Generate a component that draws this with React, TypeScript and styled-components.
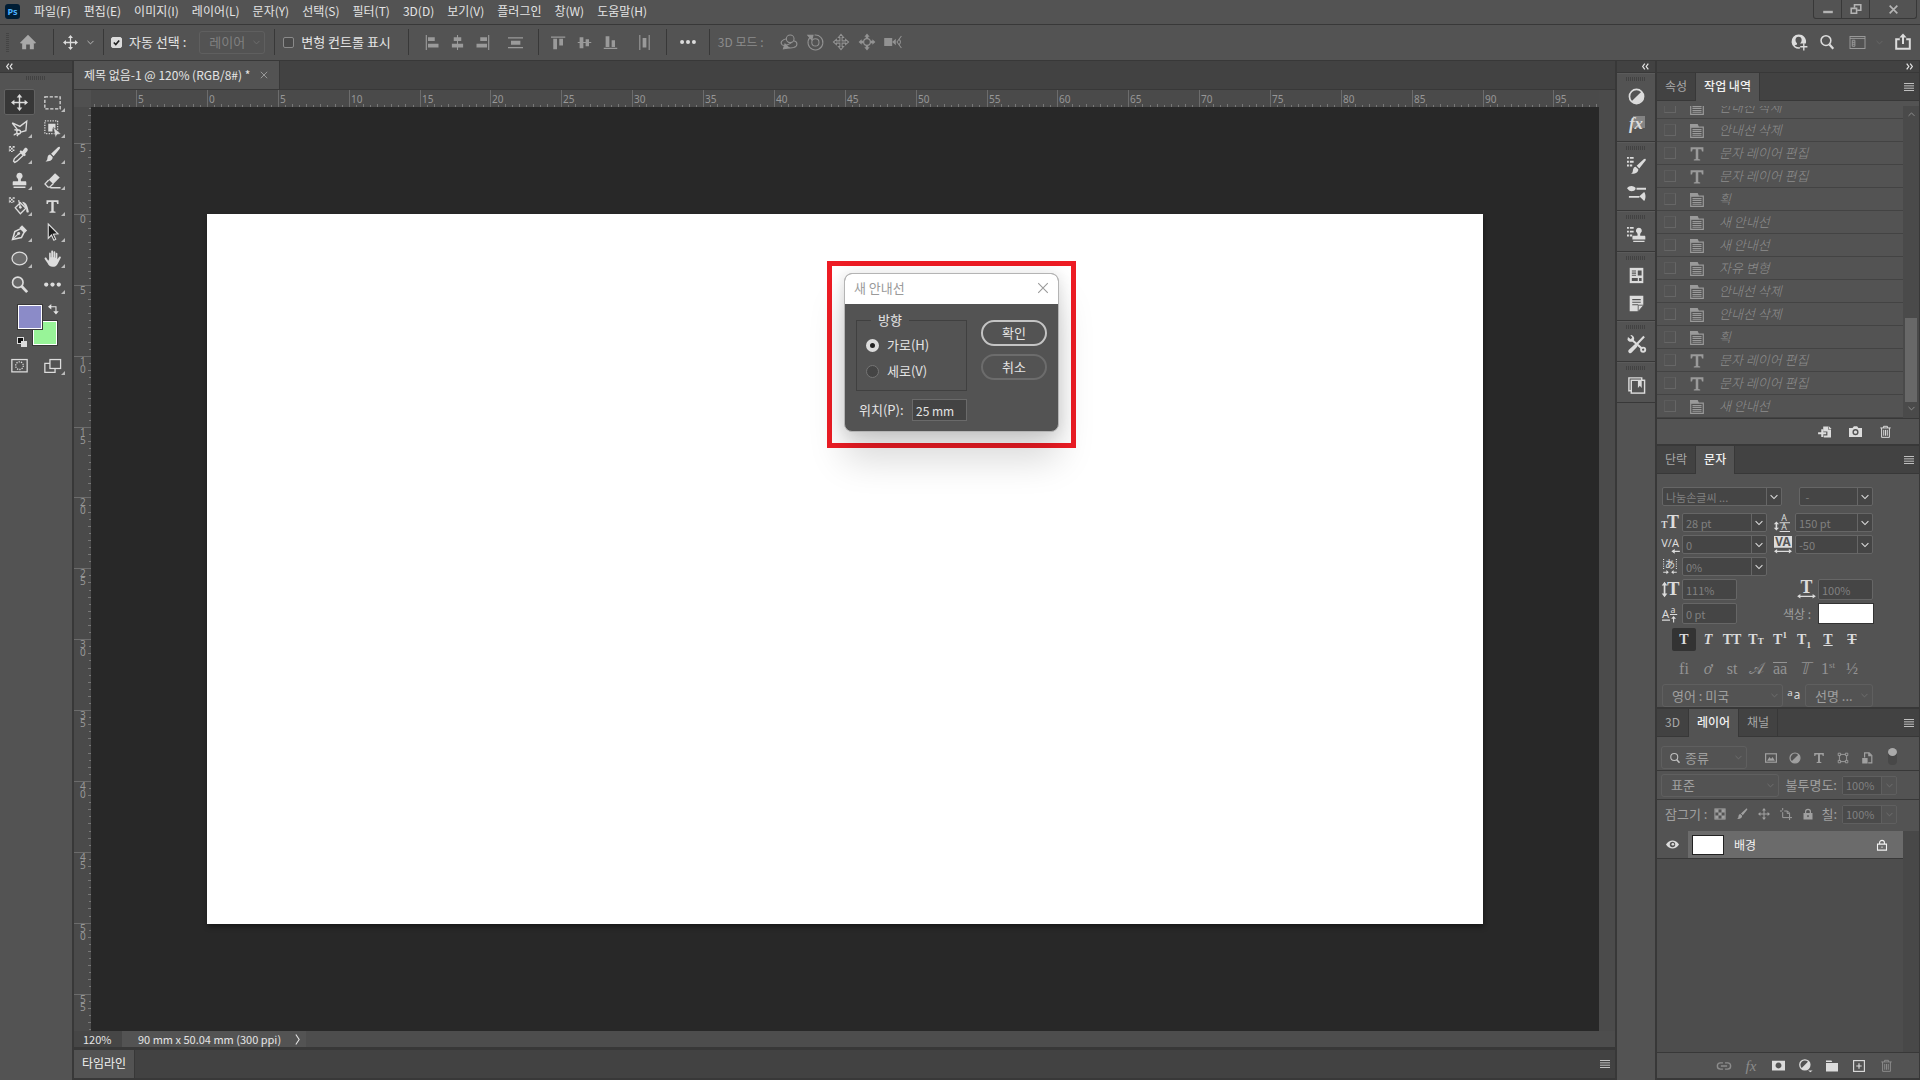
import React from 'react';
import styled, { createGlobalStyle, css } from 'styled-components';

const c = {
  panel: '#535353',
  strip: '#424242',
  line: '#383838',
  canvas: '#282828',
  ruler: '#4a4a4a',
  field: '#454545',
  edge: '#666666',
  text: '#e4e4e4',
  dim: '#a0a0a0',
  off: '#808080',
  icon: '#dcdcdc',
};

const Global = createGlobalStyle`
  *, *::before, *::after { box-sizing: border-box; }
  html, body { margin: 0; height: 100%; background: ${c.panel}; }
  body, button, input, select {
    font-family: 'Noto Sans CJK KR', 'Noto Sans', sans-serif;
    font-size: 12px;
    line-height: 16px;
  }
  button, input, select { color: inherit; margin: 0; padding: 0; }
  button { background: none; border: 0; display: inline-flex; align-items: center; justify-content: center; }
  ul { list-style: none; margin: 0; padding: 0; }
`;

/* ---------- icons ---------- */

const S = { fill: 'none', stroke: 'currentColor', strokeWidth: 1.5 } as const;
const F = { fill: 'currentColor' } as const;

const checker = (
  <g {...F}>
    <path d="M0 0h2v2h-2zM4 0h2v2h-2zM2 2h2v2h-2zM0 4h2v2h-2zM4 4h2v2h-2zM2 6h2v1h-2z" />
    <path d="M0 0v7M6 0v2" stroke="currentColor" strokeWidth=".6" />
  </g>
);
const brushShape = <path {...F} d="M18.500 1.200c.6.6.3 1.500-.2 2.200L11.300 12 8.300 9 16.400 1.500c.7-.6 1.600-.8 2.100-.3zM7.200 10l3 2.900c.2 3-2.400 5.600-8.400 5.200 2.300-1.200 2-2.700 2.400-4.900.4-1.900 1.500-3.100 3-3.200z" />;
const stampShape = <path {...F} d="M10 1a3.600 3.600 0 0 1 2.200 6.500c-.8 1.200-.7 2.500-.4 3.500h5c.8 0 1.200.6 1.200 1.500v3H2v-3c0-.9.4-1.500 1.200-1.500h5c.3-1 .4-2.300-.4-3.500A3.600 3.600 0 0 1 10 1zM3 17h14v1.800H3z" />;
const trash = (
  <g {...S} strokeWidth="1.500"><path d="M2 4.500h16M7 4.500V2h6v2.500M4 4.500v14.500h12V4.500M7.300 7.500v9M10 7.500v9M12.700 7.500v9" /></g>
);

const icons: Record<string, React.ReactNode> = {
  move: <g><path {...S} strokeWidth="1.700" d="M10 3v14M3 10h14" /><path {...F} d="M10 0l3.300 4H6.700zM10 20l3.300-4H6.700zM0 10l4-3.300v6.600zM20 10l-4-3.300v6.600z" /></g>,
  marquee: <rect {...S} x="1" y="3.500" width="18" height="14" strokeDasharray="3.800 1.900" />,
  lasso: <g {...S} strokeWidth="1.600"><path d="M8 12L1.500 3.500l9 4L18.500 1.500l-1 11-6 1.800" /><circle cx="9" cy="14" r="2.200" /><path d="M7.500 15.500c-1.500 1.500-3.500.500-4 2.500M8.500 12L4 11.500M9 16l-2 3" /></g>,
  objectSel: <g><rect {...S} x="1" y="1" width="15" height="15" strokeDasharray="1.500 1.500" /><path {...F} d="M5 4.500h8.500v5.500h-3.500v3.500H5z" /><path {...F} d="M11 8.500l9 8-4.500.5-2 3.500z" stroke={c.panel} strokeWidth=".6" /></g>,
  eyedropper: <g><g transform="translate(-2 0)">{checker}</g><path {...S} strokeWidth="1.600" d="M4.500 19.300l-1.500-1.500 1-3 7.500-7 3 3-7.500 7z" /><path {...F} d="M10 6.500l1.500-1.500 1.800 1.300L16 2.600c1.700-1.700 5 1.200 3.200 3.200L16.500 9l1 1.600-1.500 1.500z" /></g>,
  brush: brushShape,
  stamp: stampShape,
  eraser: <g><path {...F} d="M13 1.500l5.500 5-7.500 7.500-5.500-5z" /><path {...S} strokeWidth="1.600" d="M5.500 9.500L1.200 14l3.500 3.800h2L11 13.500M7.500 18.500h12" /></g>,
  bucket: <g><g transform="translate(-2 -1)">{checker}</g><path {...S} strokeWidth="1.500" d="M5 11.500l6-6 6.500 6.500-6.500 6.500zM9 2.500L11 10.500" /><circle {...F} cx="11" cy="11" r="1.600" /><path {...F} d="M13 4.500c4.500 0 6.500 4 8 12-2.300 1.800-3.600-.5-3-4z" /></g>,
  type: <path {...F} d="M2 1.500h16v5.300h-1.800l-.8-2.800h-3.800v12.400l2.400.6v1.200H6v-1.200l2.400-.6V4H4.600l-.8 2.800H2z" />,
  pen: <g><path {...S} strokeWidth="1.800" d="M1.800 18.200L4.500 9l7-3.500 4 4L12.300 16z" /><path {...F} d="M10 4.500L13 1.500l6 6-3 3z" /><path {...S} strokeWidth="1.300" d="M2.500 17.500l6-6" /><circle {...F} cx="9" cy="11.200" r="1.700" /></g>,
  pathSel: <path d="M5 0l11.500 11.500-5.500.5 2.800 6-2.200 1-2.800-6L5 17z" fill="#1c1c1c" stroke="currentColor" strokeWidth="1.300" />,
  ellipse: <ellipse {...S} cx="10" cy="10" rx="8.800" ry="7.500" fill="#6b6b6b" />,
  hand: <path {...F} d="M6 11V4c0-1.500 2-1.500 2 0v4.500h.5V1.700c0-1.600 2.200-1.600 2.200 0v6.800h.5V2.500c0-1.500 2.100-1.500 2.100 0v6.500h.5V4.500c0-1.500 2-1.500 2 0L15.700 11l2.200-3c1-1.200 2.600 0 1.700 1.500L16 16.500c-1.300 2.500-3 3.300-5.800 3.300-3.200 0-4.800-1.600-5.900-4.200L.8 10.500C.2 9 2 8.200 2.900 9.400L5 12.500z" />,
  zoomTool: <g><circle {...S} strokeWidth="1.900" cx="8" cy="7.500" r="6.200" fill="#666" /><path stroke="currentColor" strokeWidth="3.200" d="M12.500 12l6.500 7" /></g>,
  dots: <g {...F}><circle cx="2.600" cy="10" r="2.500" /><circle cx="10" cy="10" r="2.500" /><circle cx="17.400" cy="10" r="2.500" /></g>,
  swap: <g><path {...S} strokeWidth="2" d="M5 5h9.500v9" /><path {...F} d="M6 0v10L0 5zM9.500 13h10l-5 6z" /></g>,
  mask: <g {...S}><rect x="1" y="3" width="18" height="14.500" /><circle cx="10" cy="10.200" r="4.500" strokeDasharray="1.500 1.300" /></g>,
  screen: <g {...S}><path d="M7 7.500H1V18h12v-4" /><rect x="7" y="3" width="12.500" height="10.500" /></g>,
  home: <path {...F} d="M10 1L20 11l-1.500 1.200-1.200-1V19h-5v-5.800H7.700V19h-5v-7.800l-1.200 1L0 11z" />,
  alignL: <g {...F}><path d="M1 0h1.500v20H1zM4 3h9v5H4zM4 11.500h14v5H4z" /></g>,
  alignC: <g {...F}><path d="M9.300 0h1.400v20H9.300zM5 3h10v5H5zM2.500 11.500h15v5h-15z" /></g>,
  alignR: <g {...F}><path d="M17.500 0H19v20h-1.500zM7 3h9v5H7zM2 11.500h14v5H2z" /></g>,
  distV: <g {...F}><path d="M0 3h20v1.500H0zM0 16h20v1.500H0zM4 7.500h12.500v5.500H4z" /></g>,
  alignT: <g {...F}><path d="M0 2h19v1.500H0zM3 5h5v14H3zM11 5h5v9h-5z" /></g>,
  alignM: <g {...F}><path d="M1 9.300h18v1.400H1zM3.500 3h5v14.500h-5zM11.500 5.500h4.500v9.500h-4.500z" /></g>,
  alignB: <g {...F}><path d="M1 17h18v1.500H1zM3.500 1.500h5V16h-5zM11.500 7h4.500v9h-4.500z" /></g>,
  distH: <g {...F}><path d="M3 0h1.500v20H3zM15.500 0H17v20h-1.500zM7.500 4h5v12.500h-5z" /></g>,
  orbit: <g {...S} strokeWidth="1.300"><circle cx="11.500" cy="6" r="4.800" /><path d="M7 6C2 7-2 10 1.500 13.500c2.500 2 9-.5 12-3M15.800 8.500c5.500 1 5.500 7 0 8.500-4 .8-7 .3-9-1" /><path {...F} d="M3 18.500l2-6 5 5z" /></g>,
  roll: <g {...S} strokeWidth="1.300"><circle cx="10.500" cy="10.500" r="4.500" /><path d="M3.500 4.500a9.300 9.300 0 1 0 6-3.200" /><path {...F} d="M1 1.500l6.500 0-1.500 6z" /></g>,
  pan3d: <path {...S} strokeWidth="1.300" d="M10 .5l3.200 3.800h-1.800V8.600h4.300V6.800L19.500 10l-3.800 3.200v-1.800h-4.300v4.300h1.800L10 19.500l-3.200-3.800h1.800v-4.300H4.300v1.800L.5 10l3.800-3.200v1.800h4.300V4.300H6.800z" />,
  slide3d: <g><circle {...S} cx="10" cy="10" r="4.200" /><path {...F} d="M10-.5l3.300 3.800h-1.800V6H8.500V3.300H6.700zM10 20.500l3.300-3.800h-1.800V14h-3v2.700H6.700zM-.5 10l3.800-3.300v1.800H6v3H3.300v1.800zM20.500 10l-3.800-3.300v1.800H14v3h2.700v1.800z" /></g>,
  camera3d: <g><path {...F} d="M-1 5h10v10H-1zM9 10l4.500-4v8z" /><path {...S} strokeWidth="1.300" d="M20.500 2.500L15 10l5.500 7.500M18 7c1.500 1.500 1.500 4 0 6" /></g>,
  user: <g><path {...F} d="M9.500.5a9 9 0 1 0 1.500 17.900V12h7.500A9 9 0 0 0 9.500.5z" /><path d="M9.500 3.500c5 0 4.500 6.500 2 8v1.500l2.500 1.500c-2 2.800-7 2.800-9.500 0L7.500 13v-1.500C5 10 4.500 3.500 9.500 3.500z" fill={c.panel} /><path {...S} strokeWidth="1.700" d="M16 11.500v9M11.500 16h9" /></g>,
  search: <g {...S} strokeWidth="2.200"><circle cx="8.500" cy="8" r="7" /><path d="M13.500 13.500l5.500 6" strokeWidth="3.200" /></g>,
  workspace: <g {...S} strokeWidth="1.300"><rect x="0" y="2" width="20" height="16" /><path d="M0 4.500h20M3 7h3.500v8H3zM3 9.700h3.500M3 12.300h3.500" /></g>,
  share: <g {...S} strokeWidth="2.500"><path d="M6 6.500H1.500v12h17v-12H14" /><path d="M10 12.500V3" /><path {...F} stroke="none" d="M10-.5l4.500 5h-9z" /></g>,
  min: <path {...F} d="M2 13h16v4H2z" />,
  restore: <g {...S} strokeWidth="2.600"><path d="M2 9h9v8H2z" /><path d="M7.500 8V3h10.500v9h-6" /></g>,
  close: <path {...S} strokeWidth="3" d="M3 3l14 14M17 3L3 17" />,
  thinClose: <path {...S} strokeWidth="1.800" d="M2 2l16 16M18 2L2 18" />,
  chevron: <path {...S} strokeWidth="2.700" d="M1.500 5.500l8.500 8.500 8.500-8.500" />,
  chevronUp: <path {...S} strokeWidth="2.700" d="M1.500 14l8.500-8.500 8.500 8.500" />,
  right: <path {...S} strokeWidth="2" d="M7 1l6 9-6 9" />,
  collapse: <path {...S} strokeWidth="3.500" d="M8 2L2 10l6 8M18 2l-6 8 6 8" />,
  expand: <path {...S} strokeWidth="3.500" d="M2 2l6 8-6 8M12 2l6 8-6 8" />,
  burger: <path {...S} strokeWidth="2" d="M0 3h20M0 7.700h20M0 12.400h20M0 17h20" />,
  adjust: <g><circle {...S} strokeWidth="2" cx="10" cy="10" r="8.300" /><path {...F} d="M16 4A8.500 8.500 0 0 1 4 16z" /></g>,
  adjustMenu: <g><circle {...S} strokeWidth="2" cx="9" cy="9" r="7.800" /><path {...F} d="M14.500 3.500a7.600 7.600 0 0 1-11 11zM14 17.500h7l-3.500 3z" /></g>,
  brushes: <g><g {...F}><path d="M0 1h2v2H0zM3 1h4v2H3zM0 5h2v2H0zM3 5h4v2H3zM0 9h2v2H0zM3 9h2.500v2H3z" /></g><g transform="translate(2.500 2) scale(.92)">{brushShape}</g></g>,
  brushSet: <g {...F}><path d="M0 4.500C2 2 5 1.500 7.500 3l1.500 1v1.500L7.500 7C5 8 2 7.500 1.500 6zM10 4h10v2H10zM2 12.500h11v2H2zM13 13l5-4.500c2 2 2 7.500 0 9.500z" /></g>,
  cloneSrc: <g><path {...F} d="M0 2h2v2H0zM3 2h4v2H3zM0 6h2v2H0zM3 6h4v2H3zM0 10h2v2H0zM3 10h2.500v2H3z" /><g transform="translate(4 2) scale(.85)">{stampShape}</g></g>,
  libs: <g><path {...F} d="M2 1h16v18H2z" /><path d="M4.500 4h5v1.300h-5zM4.500 6.500h5v1.300h-5zM4.500 9h5v1.300h-5zM11.500 4h4.500v6h-4.500zM4.500 13h7v3.500h-7zM13 13h3v3.500h-3z" fill={c.panel} /></g>,
  note: <g><path {...F} d="M2 1h16v11l-6 7H2z" /><path d="M5 5.500h10M5 8.500h10M5 11.500h7" stroke={c.panel} strokeWidth="1.400" /><path {...F} stroke={c.panel} d="M18.500 12h-6.500v7.500z" /></g>,
  tools: <g><path stroke="currentColor" strokeWidth="2.200" d="M5 5l11 9.500M18 1.500L9 11" /><circle {...S} strokeWidth="2" cx="17" cy="15.500" r="2.200" /><path {...F} d="M1 2l3 2.500 1.500-2L3.500 0C6 0 8 2 7.500 4.500 6 8.500 1.500 7.500.5 5zM8.500 9.500l2.500 2.500-6 6.500c-2 2-5-1-3-3z" /></g>,
  book: <g {...S} strokeWidth="1.500"><rect x="4.500" y="4.500" width="14" height="13.500" /><path d="M4.500 15.500H2V2h13.500v2.500" /><path {...F} d="M11.500 5h4v7.500l-2-2.200-2 2.200z" stroke="none" /></g>,
  doc: <g><path {...S} strokeWidth="1.700" d="M1 4.500h18V19H1z" /><path {...F} d="M0 0h11l2 4.500H0z" /><path {...S} strokeWidth="1.500" d="M3.500 8h13M3.500 10.800h13M3.500 13.500h13M3.500 16.200h13" /></g>,
  newDoc: <g><path {...F} fillRule="evenodd" d="M7 1h8v5h5v13H8v-3h6v-7H7zM16 0l5 5h-5z" /><path d="M5.500 5.500v13M-1.500 12h13.500" stroke="currentColor" strokeWidth="3.500" /></g>,
  camera: <g><path {...F} d="M0 4.500h5.500l2-2.500h5l2 2.500H20v14H0z" /><circle cx="10" cy="11" r="3.600" {...S} stroke={c.panel} strokeWidth="2.200" /></g>,
  trash,
  image: <g><rect {...S} strokeWidth="2" x="1" y="3" width="18" height="14" /><path {...F} d="M3.500 14.500l4-6 2.500 3 2.500-3 4 6z" /></g>,
  shape: <g {...S} strokeWidth="1.500"><path d="M4 4h12v12H4z" /><g fill={c.panel}><path d="M2 2h4v4H2zM14 2h4v4h-4zM2 14h4v4H2zM14 14h4v4h-4z" /></g></g>,
  smart: <g><path {...S} strokeWidth="2" d="M6 9V1.500h7.500L18 6v12h-6" /><path {...F} d="M2 10h9v9H2zM12 1v6h6z" /></g>,
  lock: <g><path {...S} strokeWidth="2" d="M6 9V6c0-5 8-5 8 0v3" /><path {...F} fillRule="evenodd" d="M2.500 8.500h15v10.500h-15zM10 12a1.500 1.500 0 1 0 .01 0z" /></g>,
  lockOpen: <g {...S} strokeWidth="1.800"><path d="M6 8V6c0-5 8-5 8 0v2M2.500 8.500h15v10h-15z" /><circle {...F} cx="10" cy="13.500" r="1.200" stroke="none" /></g>,
  checks: <g><rect {...S} strokeWidth="1.600" x="1.500" y="1.500" width="17" height="17" /><path {...F} d="M2 2h5.500v5.500H2zM12.500 2H18v5.500h-5.500zM7.300 7.300h5.400v5.400H7.300zM2 12.500h5.500V18H2zM12.500 12.500H18V18h-5.500z" /></g>,
  artboard: <g {...S} strokeWidth="1.600"><path d="M4.500 0v4M0 5h3.500M16 16.500V20M16 16H20M4.500 7v9h11.500V9M7 5h5.500l3.500 3.500" /><path d="M12 5v4h4" /></g>,
  eye: <g><path {...F} d="M0 10c5-8 15-8 20 0-5 8-15 8-20 0z" /><circle cx="10" cy="10" r="4.200" fill={c.panel} /><circle {...F} cx="10.500" cy="9.500" r="2" /></g>,
  link: <g {...S} strokeWidth="2"><path d="M8.500 14.500H5a4.500 4.500 0 0 1 0-9h3.500M11.500 5.500H15a4.500 4.500 0 0 1 0 9h-3.500M5.500 10h9" /></g>,
  addMask: <g><path {...F} fillRule="evenodd" d="M0 2.500h20v15H0zM10 5.500a4.500 4.500 0 1 0 .01 0z" /></g>,
  folder: <path {...F} d="M0 1h9l1.500 2.500H0zM0 5h20v14H0z" />,
  plus: <g {...S} strokeWidth="1.900"><rect x="1" y="1" width="18" height="18" /><path d="M10 5.500v9M5.500 10h9" /></g>,
  fontSize: <g {...F} fontFamily="Liberation Serif, serif" fontWeight="700"><text x="-1" y="17" fontSize="11">T</text><text x="6" y="17" fontSize="21">T</text></g>,
  leading: <g {...F} fontFamily="Noto Sans, sans-serif"><text x="9" y="8" fontSize="11">A</text><text x="9" y="19" fontSize="11">A</text><path d="M7 9h13v1.300H7zM7 20h13v1.200H7zM3 8l3.300 3.500H4V16h2.300L3 19.500-.3 16H2v-4.500H-.3z" /></g>,
  kerning: <g {...F} fontFamily="Noto Sans, sans-serif"><text x="-1" y="13" fontSize="13">V/A</text><path d="M11 18l4-2.800v2.100h6v1.400h-6v2.100z" /></g>,
  tracking: <g><path {...F} d="M0 0h20v13H0zM0 17l3.500-2.500v1.800h13v-1.800L20 17l-3.500 2.500v-1.800h-13v1.800z" /><text x="1.500" y="11.500" fontSize="13" fontWeight="700" fontFamily="Noto Sans, sans-serif" fill={c.panel}>VA</text></g>,
  tsume: <g {...F}><text x="3.500" y="11.500" fontSize="13" fontFamily="Noto Sans CJK JP, sans-serif">あ</text><path d="M1.500 15.800h4V13.800l3 2.700-3 2.700v-2h-4zM18.500 15.800h-4v-2l-3 2.700 3 2.700v-2h4z" /><path {...S} strokeWidth="1.400" strokeDasharray="1.400 1.400" d="M2 0v12.500M18 0v12.500" /></g>,
  vScale: <g {...F}><path d="M3 1l3.300 4.300H4v9.400h2.300L3 19-.3 14.700H2V5.300H-.3z" /><text x="6" y="17" fontSize="22" fontWeight="700" fontFamily="Liberation Serif, serif">T</text></g>,
  hScale: <g {...F}><text x="3" y="14" fontSize="21" fontWeight="700" fontFamily="Liberation Serif, serif">T</text><path d="M-1 18l3.800-2.700v2h14.400v-2L21 18l-3.800 2.700v-2H2.800v2z" /></g>,
  baseline: <g {...F} fontFamily="Noto Sans, sans-serif"><text x="0" y="15" fontSize="14">A</text><text x="10.500" y="8.500" fontSize="11">a</text><path d="M0 17h10v1.400H0zM10 10h9v1.400h-9zM14.500 12.500l3 3.500h-2.300v4.500h-1.400V16h-2.300z" /></g>,
  antialias: <g {...F} fontFamily="Noto Sans, sans-serif"><text x="-1" y="10" fontSize="15">a</text><text x="9" y="16" fontSize="18">a</text></g>,
};

const IconSvg = styled.svg<{ $s: number }>`
  width: ${p => p.$s}px;
  height: ${p => p.$s}px;
  flex: none;
  display: block;
  overflow: visible;
`;
const Icon = ({ n, s = 16 }: { n: string; s?: number }) => (
  <IconSvg $s={s} viewBox="0 0 20 20" aria-hidden="true">{icons[n]}</IconSvg>
);

/* ---------- shell ---------- */

const Shell = styled.div`
  display: flex;
  flex-direction: column;
  height: 100vh;
  min-height: 900px;
  min-width: 1200px;
  background: ${c.panel};
  color: ${c.text};
  overflow: hidden;
  cursor: default;
`;
const MenuBar = styled.header`
  display: flex;
  height: 25px;
  flex: none;
  border-bottom: 1px solid ${c.line};
`;
const Logo = styled.span`
  width: 15px;
  height: 15px;
  margin: 4px 14px 0 5px;
  border-radius: 3px;
  background: #001d34;
  color: #4bb0ff;
  font: 700 9px/15px 'Noto Sans', sans-serif;
  text-align: center;
`;
const Menus = styled.nav`
  display: flex;
  flex: 1;
  gap: 13px;
  padding-top: 3px;
`;
const WindowButtons = styled.div`
  display: flex;
  height: 19px;
  margin-right: 3px;
  border: 1px solid ${c.line};
  border-top: 0;
  border-radius: 0 0 3px 3px;
  color: #b4b4b4;
`;
const WindowButton = styled.button<{ $w: number }>`
  width: ${p => p.$w}px;
  & + & { border-left: 1px solid ${c.line}; }
`;

const OptionsBar = styled.div`
  display: flex;
  align-items: center;
  flex: none;
  height: 36px;
  padding-bottom: 1px;
  border-bottom: 1px solid ${c.line};
`;
const Grip = styled.i<{ $v?: boolean }>`
  flex: none;
  ${p => p.$v
    ? css`width: 3px; height: 20px; margin: 0 0 0 6px; background: repeating-linear-gradient(0deg, #444 0 1px, transparent 1px 2px);`
    : css`width: 20px; height: 4px; margin: 3px auto 1px; background: repeating-linear-gradient(90deg, #424242 0 1px, transparent 1px 2px);`}
`;
const Divider = styled.i`
  width: 1px;
  height: 26px;
  flex: none;
  background: ${c.line};
`;
const Cell = styled.button<{ $w?: number; $tone?: string }>`
  width: ${p => p.$w ?? 26}px;
  flex: none;
  color: ${p => p.$tone ?? c.icon};
`;
const Group = styled.div<{ $l?: number; $r?: number }>`
  display: flex;
  align-items: center;
  padding: 0 ${p => p.$r ?? 8}px 0 ${p => p.$l ?? 8}px;
`;
const CheckLabel = styled.label`
  display: flex;
  align-items: center;
  gap: 7px;
  font-size: 13px;
  white-space: nowrap;
`;
const Check = styled.input`
  appearance: none;
  width: 11px;
  height: 11px;
  border: 1px solid #8a8a8a;
  border-radius: 2px;
  background: #4a4a4a;
  &:checked {
    border-color: #dcdcdc;
    background: #dcdcdc url("data:image/svg+xml,%3Csvg xmlns='http://www.w3.org/2000/svg' viewBox='0 0 10 10'%3E%3Cpath d='M2 5l2.200 2.200L8 2.800' fill='none' stroke='%23222' stroke-width='1.800'/%3E%3C/svg%3E");
  }
`;
const SelectBox = styled.span<{ $w: number; $off?: boolean }>`
  display: inline-flex;
  position: relative;
  align-items: center;
  width: ${p => p.$w}px;
  height: 23px;
  flex: none;
  border: 1px solid #5f5f5f;
  border-radius: 3px;
  color: ${p => (p.$off ? c.off : c.dim)};
  > svg { position: absolute; right: 4px; color: #6e6e6e; pointer-events: none; }
  > svg:first-child { right: auto; left: 8px; color: #c0c0c0; }
`;
const Select = styled.select<{ $l?: number }>`
  appearance: none;
  width: 100%;
  height: 100%;
  padding-left: ${p => p.$l ?? 9}px;
  border: 0;
  outline: 0;
  background: none;
  font-size: 13px;
`;
const ModeText = styled.span`
  color: #8c8c8c;
  font-size: 12px;
  white-space: nowrap;
`;
const Spacer = styled.i`flex: 1;`;

const Workspace = styled.main`
  display: flex;
  flex: 1;
  min-height: 0;
  gap: 2px;
  padding-right: 1px;
  background: ${c.line};
`;
const Strip = styled.div<{ $end?: boolean }>`
  display: flex;
  align-items: center;
  justify-content: ${p => (p.$end ? 'flex-end' : 'flex-start')};
  flex: none;
  height: 12px;
  padding: 0 6px;
  border-bottom: 1px solid ${c.line};
  background: ${c.strip};
`;
const Column = styled.aside<{ $w: number }>`
  display: flex;
  flex-direction: column;
  flex: none;
  width: ${p => p.$w}px;
  background: ${c.panel};
`;

/* ---------- toolbox ---------- */

const ToolGrid = styled.div<{ $top?: number }>`
  display: grid;
  grid-template-columns: 33px 33px;
  grid-auto-rows: 26px;
  padding: ${p => p.$top ?? 0}px 0 0 3px;
`;
const Tool = styled.button<{ $on?: boolean; $more?: boolean }>`
  position: relative;
  color: ${c.icon};
  ${p => p.$on && css`
    margin: 0 1px;
    border: 1px solid #626262;
    border-radius: 2px;
    background: #373737;
  `}
  ${p => p.$more && css`
    &::after {
      content: '';
      position: absolute;
      right: 4px;
      bottom: 3px;
      border: 2px solid transparent;
      border-right-color: #bbb;
      border-bottom-color: #bbb;
    }
  `}
`;
const Swatches = styled.div`
  position: relative;
  height: 55px;
`;
const Swatch = styled.button<{ $x: number; $y: number; $c: string }>`
  position: absolute;
  left: ${p => p.$x}px;
  top: ${p => p.$y}px;
  width: 24px;
  height: 24px;
  border: 1px solid #fff;
  outline: 1px solid ${c.line};
  background: ${p => p.$c};
`;
const SwapButton = styled.button`
  position: absolute;
  left: 48px;
  top: 7px;
`;
const ResetButton = styled.button`
  position: absolute;
  z-index: 0;
  left: 17px;
  top: 40px;
  width: 7px;
  height: 7px;
  border: 1px solid #ddd;
  background: #111;
  &::after {
    content: '';
    position: absolute;
    z-index: -1;
    left: 3px;
    top: 3px;
    width: 6px;
    height: 6px;
    background: #ddd;
  }
`;

/* ---------- document ---------- */

const Doc = styled.section`
  display: flex;
  flex-direction: column;
  flex: 1;
  min-width: 0;
  background: ${c.strip};
`;
const DocTabs = styled.div`
  display: flex;
  flex: none;
  height: 29px;
  border-bottom: 1px solid ${c.line};
`;
const DocTab = styled.button`
  gap: 10px;
  padding: 0 11px 1px 10px;
  border-right: 1px solid ${c.line};
  background: ${c.panel};
  white-space: nowrap;
  svg { color: #b4b4b4; }
`;
const View = styled.div`
  display: grid;
  grid-template: 17px 1fr / 17px 1fr 16px;
  flex: 1;
  min-height: 0;
`;
const Ruler = styled.div<{ $corner?: boolean }>`
  display: flex;
  align-items: center;
  justify-content: center;
  overflow: hidden;
  min-width: 0;
  min-height: 0;
  background: ${p => (p.$corner ? '#505050' : c.ruler)};
`;
const RulerSvg = styled.svg`
  flex: none;
  font: 10px 'Noto Sans', sans-serif;
  fill: #979797;
`;
const Canvas = styled.div`
  display: flex;
  align-items: center;
  justify-content: center;
  min-width: 0;
  overflow: hidden;
  background: ${c.canvas};
`;
const ScrollStrip = styled.div`background: #4b4b4b;`;
const Artboard = styled.div`
  position: relative;
  flex: none;
  width: 1276px;
  height: 710px;
  background: #fff;
  box-shadow: 1px 3px 5px rgba(0, 0, 0, 0.4);
`;
const Callout = styled.div`
  position: absolute;
  left: 620px;
  top: 47px;
  padding: 7px 12px 11px;
  border: 5px solid #ed1c24;
`;
const Dialog = styled.form`
  width: 215px;
  border: 1px solid #b4b4b4;
  border-radius: 8px;
  background: ${c.panel};
  box-shadow: 0 28px 36px rgba(0, 0, 0, 0.15), 0 2px 16px rgba(0, 0, 0, 0.14);
  overflow: hidden;
  font-size: 13px;
`;
const DialogTitle = styled.div`
  display: flex;
  align-items: center;
  justify-content: space-between;
  height: 30px;
  padding: 0 9px 2px;
  background: #fff;
  color: #9a9a9a;
`;
const DialogBody = styled.div`
  display: grid;
  grid-template-columns: 111px 66px;
  justify-content: space-between;
  padding: 8px 11px 10px;
`;
const Direction = styled.fieldset`
  margin: 0;
  padding: 4px 9px 6px;
  min-width: 0;
  border: 1px solid #404040;
  legend { margin-left: 5px; padding: 0 7px; line-height: 16px; }
`;
const RadioLabel = styled.label`
  display: flex;
  align-items: center;
  gap: 8px;
  height: 26px;
`;
const Radio = styled.input`
  appearance: none;
  width: 13px;
  height: 13px;
  border: 1px solid #757575;
  border-radius: 50%;
  background: #454545;
  &:checked { border: 4px solid #dcdcdc; background: #222; }
`;
const DialogButtons = styled.div`
  display: flex;
  flex-direction: column;
  gap: 8px;
  padding-top: 8px;
`;
const Pill = styled.button<{ $primary?: boolean }>`
  height: 26px;
  padding-bottom: 1px;
  border: ${p => (p.$primary ? '2px solid #c4c4c4' : '2px solid #6c6c6c')};
  border-radius: 13px;
  font-size: 13px;
`;
const PositionRow = styled.label`
  display: flex;
  align-items: center;
  justify-content: space-between;
  margin-top: 8px;
  padding-left: 3px;
  white-space: nowrap;
`;
const PositionInput = styled.input`
  width: 55px;
  height: 22px;
  padding-left: 3px;
  border: 1px solid #6a6a6a;
  outline: 0;
  background: #434343;
`;
const StatusBar = styled.div`
  display: flex;
  align-items: center;
  flex: none;
  height: 16px;
  background: #4d4d4d;
  font-size: 11px;
`;
const ZoomLevel = styled.span`
  width: 48px;
  padding-left: 9px;
  background: #464646;
`;
const DocInfo = styled.span`
  display: flex;
  align-items: center;
  justify-content: space-between;
  width: 184px;
  padding: 0 3px 0 16px;
  background: ${c.panel};
  white-space: nowrap;
`;
const Timeline = styled.div`
  display: flex;
  align-items: stretch;
  justify-content: space-between;
  flex: none;
  height: 33px;
  padding-right: 5px;
  border: solid ${c.line};
  border-width: 3px 0 2px;
  background: ${c.strip};
  > svg { align-self: center; color: #c0c0c0; }
`;

/* ---------- dock ---------- */

const DockGroup = styled.div`
  display: flex;
  flex-direction: column;
  align-items: center;
  padding-bottom: 3px;
  border-top: 1px solid #5b5b5b;
  border-bottom: 1px solid ${c.line};
`;
const DockButton = styled.button`
  width: 38px;
  height: 28px;
  color: ${c.icon};
`;
const Fx = styled.span<{ $s: number; $box?: boolean }>`
  font: italic ${p => p.$s}px/20px 'Liberation Serif', serif;
  padding: 0 2px;
  ${p => p.$box && css`
    font-weight: 700;
    background: linear-gradient(#848484, #848484) 6px 2px / 14px 12px no-repeat;
  `}
`;

/* ---------- panels ---------- */

const Panel = styled.section<{ $grow?: boolean }>`
  display: flex;
  flex-direction: column;
  flex: ${p => (p.$grow ? 1 : 'none')};
  min-height: 0;
  border-bottom: 2px solid ${c.line};
`;
const Tabs = styled.div`
  display: flex;
  align-items: stretch;
  flex: none;
  height: 28px;
  padding-right: 5px;
  background: ${c.strip};
  border-bottom: 1px solid ${c.line};
  > svg { align-self: center; color: #c0c0c0; }
`;
const Tab = styled.button<{ $on?: boolean; $flat?: boolean }>`
  padding: 0 8px 2px;
  border-right: 1px solid ${c.line};
  color: ${p => (p.$on ? '#f0f0f0' : '#a8a8a8')};
  font-weight: ${p => (p.$on && !p.$flat ? 500 : 400)};
  ${p => p.$on && css`background: ${c.panel};`}
  ${p => p.$on && !p.$flat && css`margin-bottom: -1px;`}
`;
const HistoryBody = styled.div`
  display: flex;
  height: 312px;
  margin-top: 5px;
`;
const HistoryList = styled.ul`
  display: flex;
  flex: 1;
  flex-direction: column;
  justify-content: flex-end;
  overflow: hidden;
`;
const HistoryRow = styled.li`
  display: flex;
  align-items: center;
  flex: none;
  height: 23px;
  padding-left: 7px;
  border-bottom: 1px solid #434343;
  color: #8d8d8d;
  font-size: 13px;
  font-style: italic;
  font-weight: 300;
  input { width: 12px; height: 12px; appearance: none; border: 1px solid #666; border-left-color: #5c5c5c; border-top-color: #5c5c5c; }
`;
const HistoryIcon = styled.span`
  display: flex;
  justify-content: center;
  width: 16px;
  margin: 2px 14px 0 13px;
  color: #9a9a9a;
`;
const ScrollBar = styled.div`
  display: flex;
  flex-direction: column;
  align-items: center;
  width: 16px;
  padding: 5px 0 6px;
  background: #4a4a4a;
  color: #909090;
`;
const Thumb = styled.i`
  width: 12px;
  height: 84px;
  margin: auto 0 3px;
  background: #686868;
`;
const Footer = styled.div<{ $r: number; $gap: number }>`
  display: flex;
  align-items: center;
  justify-content: flex-end;
  gap: ${p => p.$gap}px;
  flex: none;
  height: 26px;
  padding-right: ${p => p.$r}px;
  border-top: 1px solid ${c.line};
  color: ${c.icon};
`;
const FootButton = styled.button<{ $off?: boolean }>`
  width: 14px;
  color: ${p => (p.$off ? '#8c8c8c' : c.icon)};
`;
const Combo = styled.span<{ $w: number; $h?: number }>`
  display: inline-flex;
  flex: none;
  width: ${p => p.$w}px;
  height: ${p => p.$h ?? 19}px;
  border: 1px solid ${c.edge};
  border-radius: 2px;
  background: ${c.field};
  input {
    flex: 1;
    width: 0;
    min-width: 0;
    padding-left: 3px;
    border: 0;
    outline: 0;
    background: none;
    color: ${c.off};
    font-size: 11px;
  }
  button { width: 15px; border-left: 1px solid ${c.edge}; }
`;
const CharForm = styled.div`
  height: 233px;
  padding: 13px 0 0 5px;
`;
const CharRow = styled.div<{ $mt: number }>`
  display: flex;
  align-items: center;
  margin-top: ${p => p.$mt}px;
  color: ${c.icon};
`;
const CharIcon = styled.span<{ $w?: number; $ml?: number }>`
  display: inline-flex;
  flex: none;
  width: ${p => p.$w ?? 20}px;
  margin-left: ${p => p.$ml ?? 0}px;
`;
const ColorLabel = styled.label`
  display: flex;
  align-items: center;
  gap: 7px;
  margin-left: 46px;
  color: ${c.dim};
`;
const ColorWell = styled.button`
  width: 56px;
  height: 21px;
  border: 1px solid #333;
  background: #fff;
`;
const GlyphRow = styled.div<{ $off?: boolean }>`
  display: flex;
  height: 23px;
  padding-left: 10px;
  margin-top: ${p => (p.$off ? 6 : 4)}px;
  color: ${p => (p.$off ? '#949494' : c.icon)};
`;
const GlyphButton = styled.button<{ $on?: boolean; $bold?: boolean }>`
  width: 24px;
  font: ${p => (p.$bold ? 700 : 400)} ${p => (p.$bold ? 14 : 16)}px/20px 'Liberation Serif', serif;
  border-radius: 2px;
  white-space: nowrap;
  background: ${p => (p.$on ? '#333' : 'none')};
  sub, sup, small { font-size: 9px; line-height: 9px; }
`;
const Arrowed = styled.span`
  border-top: 1px solid currentColor;
  line-height: 12px;
`;

const LayerRow = styled.div<{ $h: number; $l?: number; $top?: number; $bottom?: number; $last?: boolean }>`
  display: flex;
  align-items: center;
  flex: none;
  height: ${p => p.$h}px;
  padding: ${p => p.$top ?? 0}px 22px ${p => p.$bottom ?? 0}px ${p => p.$l ?? 4}px;
  border-bottom: ${p => (p.$last ? 0 : 1)}px solid ${c.line};
  color: ${c.dim};
  font-size: 13px;
  white-space: nowrap;
`;
const FilterIcons = styled.div`
  display: flex;
  margin-left: 12px;
  button { width: 24px; color: ${c.dim}; }
`;
const Toggle = styled.button`
  width: 9px;
  height: 17px;
  margin: 0 0 2px auto;
  align-items: flex-start;
  border-radius: 4px;
  background: #484848;
  &::before { content: ''; width: 9px; height: 8px; border-radius: 50%; background: #aaa; }
`;
const FieldLabel = styled.label`
  display: flex;
  align-items: center;
  gap: 5px;
  margin-left: auto;
`;
const Opacity = styled(Combo)`
  background: transparent;
  border-color: #5f5f5f;
  input { background: #4a4a4a; }
  button { border-color: #5f5f5f; color: #6e6e6e; }
`;
const LockIcons = styled.div`
  display: flex;
  margin-left: 2px;
  button { width: 22px; color: ${c.dim}; }
`;
const LayerArea = styled.div`
  flex: 1;
  padding-right: 16px;
  background: linear-gradient(270deg, #484848 16px, #4d4d4d 16px);
`;
const Layer = styled.div`
  display: flex;
  align-items: stretch;
  height: 28px;
  border-bottom: 1px solid ${c.line};
  background: ${c.panel};
`;
const Eye = styled.button`
  width: 31px;
  color: ${c.icon};
`;
const LayerName = styled.div`
  display: flex;
  align-items: center;
  flex: 1;
  gap: 10px;
  padding: 0 15px 0 4px;
  background: #6b6b6b;
  color: #f2f2f2;
  > svg { margin-left: auto; }
`;
const LayerThumb = styled.i`
  width: 32px;
  height: 20px;
  border: 1px solid #222;
  background: #fff;
`;

/* ---------- data ---------- */

const menus = ['파일(F)', '편집(E)', '이미지(I)', '레이어(L)', '문자(Y)', '선택(S)', '필터(T)', '3D(D)', '보기(V)', '플러그인', '창(W)', '도움말(H)'];
const tools: [string, string][] = [
  ['move', '이동'], ['marquee', '선택 윤곽'], ['lasso', '다각형 올가미'], ['objectSel', '개체 선택'],
  ['eyedropper', '스포이드'], ['brush', '브러시'], ['stamp', '복제 도장'], ['eraser', '지우개'],
  ['bucket', '페인트 통'], ['type', '문자'], ['pen', '펜'], ['pathSel', '패스 선택'],
  ['ellipse', '타원'], ['hand', '손'], ['zoomTool', '돋보기'], ['dots', '도구 편집'],
];
const history: [string, string][] = [
  ['doc', '안내선 삭제'], ['doc', '안내선 삭제'], ['type', '문자 레이어 편집'], ['type', '문자 레이어 편집'],
  ['doc', '획'], ['doc', '새 안내선'], ['doc', '새 안내선'], ['doc', '자유 변형'], ['doc', '안내선 삭제'],
  ['doc', '안내선 삭제'], ['doc', '획'], ['type', '문자 레이어 편집'], ['type', '문자 레이어 편집'], ['doc', '새 안내선'],
];
const dock = [['adjust', 'fx'], ['brushes', 'brushSet'], ['cloneSrc'], ['libs', 'note'], ['tools'], ['book']];

/* Millimetre ruler whose middle is the middle of the artboard. */
const MM = 14.173;
const RulerScale = ({ board, vertical }: { board: number; vertical?: boolean }) => {
  const pad = 500;
  const len = board + pad * 2;
  const lastLabel = Math.floor(board / MM / 5) * 5 + 5;
  const marks: React.ReactNode[] = [];
  for (let i = -80; i <= 260; i++) {
    const at = Math.round(pad + (i * MM) / 2);
    if (at < 0 || at > len) continue;
    const major = i % 10 === 0;
    const from = major ? 0 : i % 2 === 0 ? 14 : 15;
    marks.push(vertical
      ? <rect key={i} x={from} y={at} width={17 - from} height={1} fill={major ? '#6c6c6c' : '#777'} />
      : <rect key={i} x={at} y={from} width={1} height={17 - from} fill={major ? '#6c6c6c' : '#777'} />);
    const mm = i / 2;
    if (!major || mm < -5 || mm > lastLabel) continue;
    const label = String(Math.abs(mm));
    marks.push(vertical
      ? (
        <text key={`t${i}`} x={6} y={at + 9}>
          {label.split('').map((d, k) => <tspan key={k} x={6} dy={k * 8}>{d}</tspan>)}
        </text>
      )
      : <text key={`t${i}`} x={at + 2} y={13}>{label}</text>);
  }
  return <RulerSvg width={vertical ? 17 : len} height={vertical ? len : 17}>{marks}</RulerSvg>;
};

const NumberCombo = ({ label, value, w }: { label: string; value: string; w: number }) => (
  <Combo $w={w}>
    <input aria-label={label} defaultValue={value} />
    <button type="button" aria-label={`${label} 목록`}><Icon n="chevron" s={8} /></button>
  </Combo>
);

const Glyph = ({ children, ...rest }: { children: React.ReactNode; $on?: boolean; $bold?: boolean }) => (
  <GlyphButton type="button" {...rest}><span>{children}</span></GlyphButton>
);

const Tools = () => (
  <Column $w={72}>
    <Strip><Icon n="collapse" s={7} /></Strip>
    <Grip />
    <ToolGrid $top={8}>
      {tools.map(([n, label], i) => (
        <Tool key={n} type="button" aria-label={label} $on={i === 0} $more={i > 0 && n !== 'zoomTool'}>
          <Icon n={n} s={n === 'type' ? 15 : 17} />
        </Tool>
      ))}
    </ToolGrid>
    <Swatches>
      <Swatch type="button" aria-label="배경색" $x={33} $y={24} $c="#98f498" />
      <Swatch type="button" aria-label="전경색" $x={18} $y={8} $c="#8b8bc8" />
      <SwapButton type="button" aria-label="색상 전환"><Icon n="swap" s={11} /></SwapButton>
      <ResetButton type="button" aria-label="기본 색상" />
    </Swatches>
    <ToolGrid>
      <Tool type="button" aria-label="빠른 마스크"><Icon n="mask" s={17} /></Tool>
      <Tool type="button" aria-label="화면 모드" $more><Icon n="screen" s={17} /></Tool>
    </ToolGrid>
  </Column>
);

const GuideDialog = () => (
  <Callout>
    <Dialog onSubmit={e => e.preventDefault()}>
      <DialogTitle>
        새 안내선
        <button type="button" aria-label="닫기"><Icon n="thinClose" s={12} /></button>
      </DialogTitle>
      <DialogBody>
        <div>
          <Direction>
            <legend>방향</legend>
            <RadioLabel><Radio type="radio" name="dir" defaultChecked />가로(H)</RadioLabel>
            <RadioLabel><Radio type="radio" name="dir" />세로(V)</RadioLabel>
          </Direction>
          <PositionRow>위치(P): <PositionInput defaultValue="25 mm" /></PositionRow>
        </div>
        <DialogButtons>
          <Pill type="submit" $primary>확인</Pill>
          <Pill type="button">취소</Pill>
        </DialogButtons>
      </DialogBody>
    </Dialog>
  </Callout>
);

const Document = () => (
  <Doc>
    <DocTabs>
      <DocTab type="button">제목 없음-1 @ 120% (RGB/8#) * <Icon n="thinClose" s={8} /></DocTab>
    </DocTabs>
    <View>
      <Ruler $corner />
      <Ruler><RulerScale board={1276} /></Ruler>
      <ScrollStrip />
      <Ruler><RulerScale board={710} vertical /></Ruler>
      <Canvas><Artboard><GuideDialog /></Artboard></Canvas>
      <ScrollStrip />
    </View>
    <StatusBar>
      <ZoomLevel>120%</ZoomLevel>
      <DocInfo>90 mm x 50.04 mm (300 ppi) <Icon n="right" s={11} /></DocInfo>
    </StatusBar>
    <Timeline>
      <Tab type="button" $on $flat>타임라인</Tab>
      <Icon n="burger" s={10} />
    </Timeline>
  </Doc>
);

const HistoryPanel = () => (
  <Panel>
    <Tabs>
      <Tab type="button">속성</Tab>
      <Tab type="button" $on>작업 내역</Tab>
      <Spacer />
      <Icon n="burger" s={10} />
    </Tabs>
    <HistoryBody>
      <HistoryList>
        {history.map(([n, label], i) => (
          <HistoryRow key={i}>
            <input type="checkbox" aria-label={label} />
            <HistoryIcon><Icon n={n} s={n === 'type' ? 16 : 14} /></HistoryIcon>
            {label}
          </HistoryRow>
        ))}
      </HistoryList>
      <ScrollBar><Icon n="chevronUp" s={7} /><Thumb /><Icon n="chevron" s={7} /></ScrollBar>
    </HistoryBody>
    <Footer $r={27} $gap={16}>
      <FootButton type="button" aria-label="새 문서"><Icon n="newDoc" s={12} /></FootButton>
      <FootButton type="button" aria-label="스냅숏"><Icon n="camera" s={13} /></FootButton>
      <FootButton type="button" aria-label="삭제"><Icon n="trash" s={13} /></FootButton>
    </Footer>
  </Panel>
);

const CharacterPanel = () => (
  <Panel>
    <Tabs>
      <Tab type="button">단락</Tab>
      <Tab type="button" $on>문자</Tab>
      <Spacer />
      <Icon n="burger" s={10} />
    </Tabs>
    <CharForm>
      <CharRow $mt={0}>
        <NumberCombo label="글꼴" value="나눔손글씨 ..." w={120} />
        <CharIcon $w={17} />
        <NumberCombo label="글꼴 스타일" value=" -" w={74} />
      </CharRow>
      <CharRow $mt={7}>
        <CharIcon><Icon n="fontSize" s={17} /></CharIcon>
        <NumberCombo label="크기" value="28 pt" w={85} />
        <CharIcon $ml={7} $w={21}><Icon n="leading" s={16} /></CharIcon>
        <NumberCombo label="행간" value="150 pt" w={78} />
      </CharRow>
      <CharRow $mt={3}>
        <CharIcon><Icon n="kerning" s={17} /></CharIcon>
        <NumberCombo label="커닝" value="0" w={85} />
        <CharIcon $ml={7} $w={21}><Icon n="tracking" s={18} /></CharIcon>
        <NumberCombo label="자간" value="-50" w={78} />
      </CharRow>
      <CharRow $mt={3}>
        <CharIcon><Icon n="tsume" s={16} /></CharIcon>
        <NumberCombo label="비율 간격" value="0%" w={85} />
      </CharRow>
      <CharRow $mt={3}>
        <CharIcon><Icon n="vScale" s={17} /></CharIcon>
        <Combo $w={55} $h={21}><input aria-label="세로 비율" defaultValue="111%" /></Combo>
        <CharIcon $ml={61}><Icon n="hScale" s={17} /></CharIcon>
        <Combo $w={55} $h={21}><input aria-label="가로 비율" defaultValue="100%" /></Combo>
      </CharRow>
      <CharRow $mt={3}>
        <CharIcon><Icon n="baseline" s={16} /></CharIcon>
        <Combo $w={55} $h={21}><input aria-label="기준선" defaultValue="0 pt" /></Combo>
        <ColorLabel>색상 : <ColorWell type="button" aria-label="문자 색상" /></ColorLabel>
      </CharRow>
      <GlyphRow>
        <Glyph $bold $on>T</Glyph>
        <Glyph $bold><i>T</i></Glyph>
        <Glyph $bold>TT</Glyph>
        <Glyph $bold>T<small>T</small></Glyph>
        <Glyph $bold>T<sup>1</sup></Glyph>
        <Glyph $bold>T<sub>1</sub></Glyph>
        <Glyph $bold><u>T</u></Glyph>
        <Glyph $bold><s>T</s></Glyph>
      </GlyphRow>
      <GlyphRow $off>
        <Glyph>fi</Glyph>
        <Glyph><i>ơ</i></Glyph>
        <Glyph>st</Glyph>
        <Glyph>𝒜</Glyph>
        <GlyphButton type="button"><Arrowed>aa</Arrowed></GlyphButton>
        <Glyph><i>𝕋</i></Glyph>
        <Glyph>1<sup>st</sup></Glyph>
        <Glyph>½</Glyph>
      </GlyphRow>
      <CharRow $mt={4}>
        <SelectBox $w={121}>
          <Select aria-label="언어"><option>영어 : 미국</option></Select>
          <Icon n="chevron" s={7} />
        </SelectBox>
        <CharIcon $w={17} $ml={5}><Icon n="antialias" s={13} /></CharIcon>
        <SelectBox $w={68}>
          <Select aria-label="앤티 앨리어스"><option>선명 ...</option></Select>
          <Icon n="chevron" s={7} />
        </SelectBox>
      </CharRow>
    </CharForm>
  </Panel>
);

const LayersPanel = () => (
  <Panel $grow>
    <Tabs>
      <Tab type="button">3D</Tab>
      <Tab type="button" $on>레이어</Tab>
      <Tab type="button">채널</Tab>
      <Spacer />
      <Icon n="burger" s={10} />
    </Tabs>
    <LayerRow $h={34} $top={8}>
      <SelectBox $w={86}>
        <Icon n="search" s={10} />
        <Select $l={23} aria-label="필터 종류"><option>종류</option></Select>
        <Icon n="chevron" s={7} />
      </SelectBox>
      <FilterIcons>
        {['image', 'adjust', 'type', 'shape', 'smart'].map(n => (
          <button key={n} type="button" aria-label={n}><Icon n={n} s={12} /></button>
        ))}
      </FilterIcons>
      <Toggle type="button" aria-label="필터 켜기" />
    </LayerRow>
    <LayerRow $h={29}>
      <SelectBox $w={118}>
        <Select aria-label="혼합 모드"><option>표준</option></Select>
        <Icon n="chevron" s={7} />
      </SelectBox>
      <FieldLabel>불투명도:
        <Opacity $w={55}><input defaultValue="100%" /><button type="button" aria-label="불투명도 조절"><Icon n="chevron" s={7} /></button></Opacity>
      </FieldLabel>
    </LayerRow>
    <LayerRow $h={31} $l={8} $bottom={3} $last>
      <span>잠그기 :</span>
      <LockIcons>
        {['checks', 'brush', 'move', 'artboard', 'lock'].map(n => (
          <button key={n} type="button" aria-label={n}><Icon n={n} s={12} /></button>
        ))}
      </LockIcons>
      <FieldLabel>칠:
        <Opacity $w={55}><input defaultValue="100%" /><button type="button" aria-label="칠 조절"><Icon n="chevron" s={7} /></button></Opacity>
      </FieldLabel>
    </LayerRow>
    <LayerArea>
      <Layer>
        <Eye type="button" aria-label="표시"><Icon n="eye" s={13} /></Eye>
        <LayerName><LayerThumb />배경<Icon n="lockOpen" s={12} /></LayerName>
      </Layer>
    </LayerArea>
    <Footer $r={26} $gap={13}>
      <FootButton type="button" aria-label="연결" $off><Icon n="link" s={14} /></FootButton>
      <FootButton type="button" aria-label="효과" $off><Fx $s={15}>fx</Fx></FootButton>
      <FootButton type="button" aria-label="마스크"><Icon n="addMask" s={13} /></FootButton>
      <FootButton type="button" aria-label="조정"><Icon n="adjustMenu" s={13} /></FootButton>
      <FootButton type="button" aria-label="그룹"><Icon n="folder" s={12} /></FootButton>
      <FootButton type="button" aria-label="새 레이어"><Icon n="plus" s={12} /></FootButton>
      <FootButton type="button" aria-label="레이어 삭제" $off><Icon n="trash" s={13} /></FootButton>
    </Footer>
  </Panel>
);

const Options = () => (
  <OptionsBar>
    <Grip $v />
    <Cell type="button" $w={38} $tone="#a8a8a8" aria-label="홈"><Icon n="home" s={16} /></Cell>
    <Group $l={6} $r={0}><Divider /></Group>
    <Group $l={5} $r={4}>
      <Cell type="button" $w={22} aria-label="이동 도구"><Icon n="move" s={15} /></Cell>
      <Cell type="button" $w={18} $tone="#bdbdbd" aria-label="도구 사전 설정"><Icon n="chevron" s={7} /></Cell>
    </Group>
    <Divider />
    <Group $l={7} $r={9}>
      <CheckLabel><Check type="checkbox" defaultChecked />자동 선택 :</CheckLabel>
      <Group $l={13} $r={0}>
        <SelectBox $w={66} $off>
          <Select aria-label="자동 선택 대상"><option>레이어</option></Select>
          <Icon n="chevron" s={7} />
        </SelectBox>
      </Group>
    </Group>
    <Divider />
    <Group $r={17}>
      <CheckLabel><Check type="checkbox" />변형 컨트롤 표시</CheckLabel>
    </Group>
    <Divider />
    <Group $l={11} $r={1}>
      {['alignL', 'alignC', 'alignR'].map(n => <Cell key={n} type="button" $w={25} $tone="#9a9a9a" aria-label={n}><Icon n={n} s={15} /></Cell>)}
      <Cell type="button" $w={42} $tone="#9a9a9a" aria-label="세로 분포"><Icon n="distV" s={15} /></Cell>
    </Group>
    <Divider />
    <Group $l={7} $r={0}>
      {['alignT', 'alignM', 'alignB'].map(n => <Cell key={n} type="button" $tone="#9a9a9a" aria-label={n}><Icon n={n} s={15} /></Cell>)}
      <Cell type="button" $w={42} $tone="#9a9a9a" aria-label="가로 분포"><Icon n="distH" s={15} /></Cell>
    </Group>
    <Divider />
    <Cell type="button" $w={42} aria-label="더 보기"><Icon n="dots" s={16} /></Cell>
    <Divider />
    <Group $r={12}><ModeText>3D 모드 :</ModeText></Group>
    {['orbit', 'roll', 'pan3d', 'slide3d', 'camera3d'].map(n => <Cell key={n} type="button" $tone="#929292" aria-label={n}><Icon n={n} s={16} /></Cell>)}
    <Spacer />
    <Cell type="button" $w={28} aria-label="계정"><Icon n="user" s={16} /></Cell>
    <Cell type="button" $w={28} aria-label="검색"><Icon n="search" s={14} /></Cell>
    <Cell type="button" $w={32} $tone="#9a9a9a" aria-label="작업 영역"><Icon n="workspace" s={15} /></Cell>
    <Cell type="button" $w={12} $tone="#666" aria-label="작업 영역 목록"><Icon n="chevron" s={7} /></Cell>
    <Cell type="button" $w={35} aria-label="공유"><Icon n="share" s={16} /></Cell>
  </OptionsBar>
);

export default function App() {
  return (
    <Shell>
      <Global />
      <MenuBar>
        <Logo>Ps</Logo>
        <Menus>{menus.map(m => <span key={m}>{m}</span>)}</Menus>
        <WindowButtons>
          <WindowButton type="button" $w={27} aria-label="최소화"><Icon n="min" s={12} /></WindowButton>
          <WindowButton type="button" $w={28} aria-label="이전 크기로"><Icon n="restore" s={12} /></WindowButton>
          <WindowButton type="button" $w={47} aria-label="닫기"><Icon n="close" s={11} /></WindowButton>
        </WindowButtons>
      </MenuBar>
      <Options />
      <Workspace>
        <Tools />
        <Document />
        <Column $w={38}>
          <Strip $end><Icon n="collapse" s={7} /></Strip>
          {dock.map((g, i) => (
            <DockGroup key={i}>
              <Grip />
              {g.map(n => (
                <DockButton key={n} type="button" aria-label={n}>
                  {n === 'fx' ? <Fx $s={17} $box>fx</Fx> : <Icon n={n} s={n === 'adjust' || n === 'libs' || n === 'note' ? 17 : 19} />}
                </DockButton>
              ))}
            </DockGroup>
          ))}
        </Column>
        <Column $w={262}>
          <Strip $end><Icon n="expand" s={7} /></Strip>
          <HistoryPanel />
          <CharacterPanel />
          <LayersPanel />
        </Column>
      </Workspace>
    </Shell>
  );
}
